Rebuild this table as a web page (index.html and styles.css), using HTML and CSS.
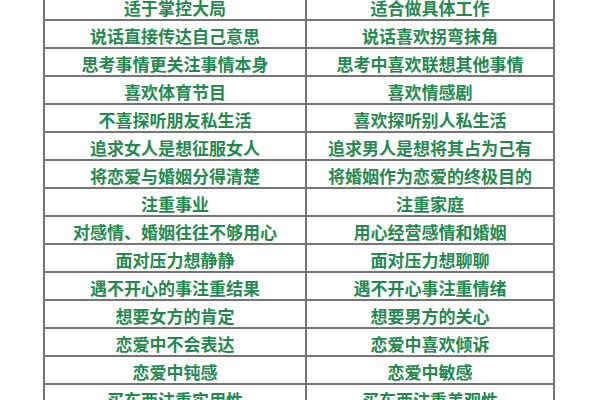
FILE: index.html
```html
<!DOCTYPE html>
<html lang="zh-CN">
<head>
<meta charset="utf-8">
<title>男女差异对照表</title>
<link rel="stylesheet" href="styles.css">
</head>
<body>
<div class="sheet">
  <div class="cell">适于掌控大局</div><div class="cell">适合做具体工作</div>
  <div class="cell">说话直接传达自己意思</div><div class="cell">说话喜欢拐弯抹角</div>
  <div class="cell">思考事情更关注事情本身</div><div class="cell">思考中喜欢联想其他事情</div>
  <div class="cell">喜欢体育节目</div><div class="cell">喜欢情感剧</div>
  <div class="cell">不喜探听朋友私生活</div><div class="cell">喜欢探听别人私生活</div>
  <div class="cell">追求女人是想征服女人</div><div class="cell">追求男人是想将其占为己有</div>
  <div class="cell">将恋爱与婚姻分得清楚</div><div class="cell">将婚姻作为恋爱的终极目的</div>
  <div class="cell">注重事业</div><div class="cell">注重家庭</div>
  <div class="cell">对感情、婚姻往往不够用心</div><div class="cell">用心经营感情和婚姻</div>
  <div class="cell">面对压力想静静</div><div class="cell">面对压力想聊聊</div>
  <div class="cell">遇不开心的事注重结果</div><div class="cell">遇不开心事注重情绪</div>
  <div class="cell">想要女方的肯定</div><div class="cell">想要男方的关心</div>
  <div class="cell">恋爱中不会表达</div><div class="cell">恋爱中喜欢倾诉</div>
  <div class="cell">恋爱中钝感</div><div class="cell">恋爱中敏感</div>
  <div class="cell">买东西注重实用性</div><div class="cell">买东西注重美观性</div>
</div>
</body>
</html>
```
FILE: styles.css
```css
html, body {
  margin: 0;
  padding: 0;
  background: #ffffff;
  overflow: hidden;
}
body {
  width: 600px;
  height: 400px;
}
.sheet {
  display: grid;
  grid-template-columns: 262px 248px;
  grid-auto-rows: 28px;
  margin: -7px 0 0 43px;
  width: 512px;
  border-left: 2px solid #757575;
  box-sizing: border-box;
  width: 512px;
}
.cell {
  border-right: 2px solid #757575;
  border-bottom: 2px solid #757575;
  display: flex;
  align-items: center;
  justify-content: center;
  padding-top: 2px;
  font-family: "Noto Sans CJK SC", "Noto Sans", sans-serif;
  font-weight: 700;
  font-size: 17px;
  line-height: 1;
  color: #25894f;
  white-space: nowrap;
}
```
